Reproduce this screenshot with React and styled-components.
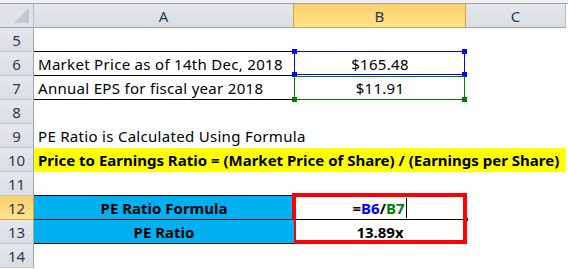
import styled, { createGlobalStyle, css } from "styled-components";

const Global = createGlobalStyle`
  body {
    margin: 0;
    background: #ffffff;
    font-family: "Noto Sans", "Open Sans", sans-serif;
  }
`

const COLS = "34px 260px 172px 100px"

const Sheet = styled.div`
  width: 568px;
  height: 269px;
  overflow: hidden;
  background: #fff;
  border-top: 3px solid #f0f0f0;
`
const HeadRow = styled.div`
  display: grid;
  grid-template-columns: ${COLS};
  height: 25px;
  border-top: 1px solid #9da3aa;
  box-sizing: border-box;
`
const Row = styled.div`
  display: grid;
  grid-template-columns: ${COLS};
  height: 24px;
`
const headBg = css`
  background: ${p => p.$on
    ? "linear-gradient(#f9cf6a, #ffe48e)"
    : "linear-gradient(#e4e7eb, #dadee3)"};
`
const Corner = styled.div`
  position: relative;
  background: #dfe3e8;
  border-right: 1px solid #b7bcc2;
  border-bottom: 1px solid #9da3aa;
  box-sizing: border-box;
  &::after {
    content: "";
    position: absolute;
    right: 4px;
    bottom: 4px;
    border-style: solid;
    border-width: 0 0 15px 15px;
    border-color: transparent transparent #c3c8ce transparent;
  }
`
const ColHead = styled.div`
  ${headBg}
  display: flex;
  align-items: center;
  justify-content: center;
  font-size: 15px;
  color: #2e3a4d;
  box-sizing: border-box;
  border-right: 1px solid ${p => p.$on ? "#e2a13e" : "#b7bcc2"};
  border-bottom: 1px solid ${p => p.$on ? "#e2a13e" : "#9da3aa"};
  ${p => p.$on && "border-left: 1px solid #e2a13e; margin-left: -1px;"}
`
const RowHead = styled.div`
  ${headBg}
  display: flex;
  align-items: flex-end;
  justify-content: center;
  padding-bottom: 1px;
  font-size: 15px;
  line-height: 20px;
  color: #2e3a4d;
  box-sizing: border-box;
  border-right: 1px solid ${p => p.$on ? "#e2a13e" : "#9da3aa"};
  border-bottom: 1px solid ${p => p.$on ? "#e2a13e" : "#c3c8ce"};
`
const Cell = styled.div`
  position: relative;
  display: flex;
  align-items: flex-end;
  justify-content: ${p => p.$center ? "center" : "flex-start"};
  padding: 0 0 1px 4px;
  box-sizing: border-box;
  font-size: 15px;
  line-height: 20px;
  letter-spacing: ${p => p.$bold ? "0" : "0.3px"};
  white-space: nowrap;
  color: #000;
  font-weight: ${p => p.$bold ? 700 : 400};
  background: ${p => p.$fill || "transparent"};
  border-bottom: 1px solid ${p => p.$under || "transparent"};
  ${p => p.$span && `grid-column: span ${p.$span};`}
  ${p => p.$center && "padding-left: 0;"}
`
const Select = styled.div`
  position: absolute;
  left: 0;
  top: ${p => p.$top}px;
  width: 171px;
  height: 24px;
  box-sizing: border-box;
  border: 1px solid ${p => p.$c};
  pointer-events: none;
`
const Handle = styled.span`
  position: absolute;
  width: 5px;
  height: 5px;
  background: ${p => p.$c};
  ${p => p.$x}: -3px;
  ${p => p.$y}: -3px;
`
const RedBox = styled.div`
  position: absolute;
  left: -2px;
  top: -3px;
  width: 175px;
  height: 51px;
  box-sizing: border-box;
  border: 4px solid #ff0000;
  pointer-events: none;
`
const MidLine = styled.div`
  position: absolute;
  left: 0;
  right: 0;
  bottom: -1px;
  height: 1px;
  background: #000;
  &::after {
    content: "";
    position: absolute;
    right: -2px;
    top: -1px;
    width: 3px;
    height: 3px;
    background: #000;
  }
`
const Ref = styled.span`
  color: ${p => p.$c};
`
const Caret = styled.span`
  display: inline-block;
  width: 1px;
  height: 20px;
  margin-left: 2px;
  background: #000;
  vertical-align: -4px;
`

function Corners({ c, bottomOnly }) {
  return (
    <>
      {!bottomOnly && <Handle $c={c} $x="left" $y="top" />}
      {!bottomOnly && <Handle $c={c} $x="right" $y="top" />}
      <Handle $c={c} $x="left" $y="bottom" />
      <Handle $c={c} $x="right" $y="bottom" />
    </>
  )
}

export default function App() {
  return (
    <Sheet>
      <Global />
      <HeadRow>
        <Corner />
        <ColHead>A</ColHead>
        <ColHead $on>B</ColHead>
        <ColHead>C</ColHead>
      </HeadRow>

      <Row>
        <RowHead>5</RowHead>
        <Cell $under="#000" />
        <Cell />
        <Cell />
      </Row>
      <Row>
        <RowHead>6</RowHead>
        <Cell $under="#000">Market Price as of 14th Dec, 2018</Cell>
        <Cell $center>
          $165.48
          <Select $top={-1} $c="#0000ff"><Corners c="#0000ff" /></Select>
        </Cell>
        <Cell />
      </Row>
      <Row>
        <RowHead>7</RowHead>
        <Cell $under="#000">Annual EPS for fiscal year 2018</Cell>
        <Cell $center>
          $11.91
          <Select $top={0} $c="#008000"><Corners c="#008000" bottomOnly /></Select>
        </Cell>
        <Cell />
      </Row>
      <Row>
        <RowHead>8</RowHead>
        <Cell /><Cell /><Cell />
      </Row>
      <Row>
        <RowHead>9</RowHead>
        <Cell $span={3}>PE Ratio is Calculated Using Formula</Cell>
      </Row>
      <Row>
        <RowHead>10</RowHead>
        <Cell $span={3} $bold $fill="#ffff00">
          Price to Earnings Ratio = (Market Price of Share) / (Earnings per Share)
        </Cell>
      </Row>
      <Row>
        <RowHead>11</RowHead>
        <Cell $under="#000" /><Cell /><Cell />
      </Row>
      <Row>
        <RowHead $on>12</RowHead>
        <Cell $center $bold $fill="#00b0f0" $under="#000">PE Ratio Formula</Cell>
        <Cell $center $bold>
          =<Ref $c="#0000ff">B6</Ref>/<Ref $c="#008000">B7</Ref><Caret />
          <MidLine />
          <RedBox />
        </Cell>
        <Cell />
      </Row>
      <Row>
        <RowHead>13</RowHead>
        <Cell $center $bold $fill="#00b0f0" $under="#000">PE Ratio</Cell>
        <Cell $center $bold>13.89x</Cell>
        <Cell />
      </Row>
      <Row>
        <RowHead>14</RowHead>
        <Cell /><Cell /><Cell />
      </Row>
    </Sheet>
  )
}
